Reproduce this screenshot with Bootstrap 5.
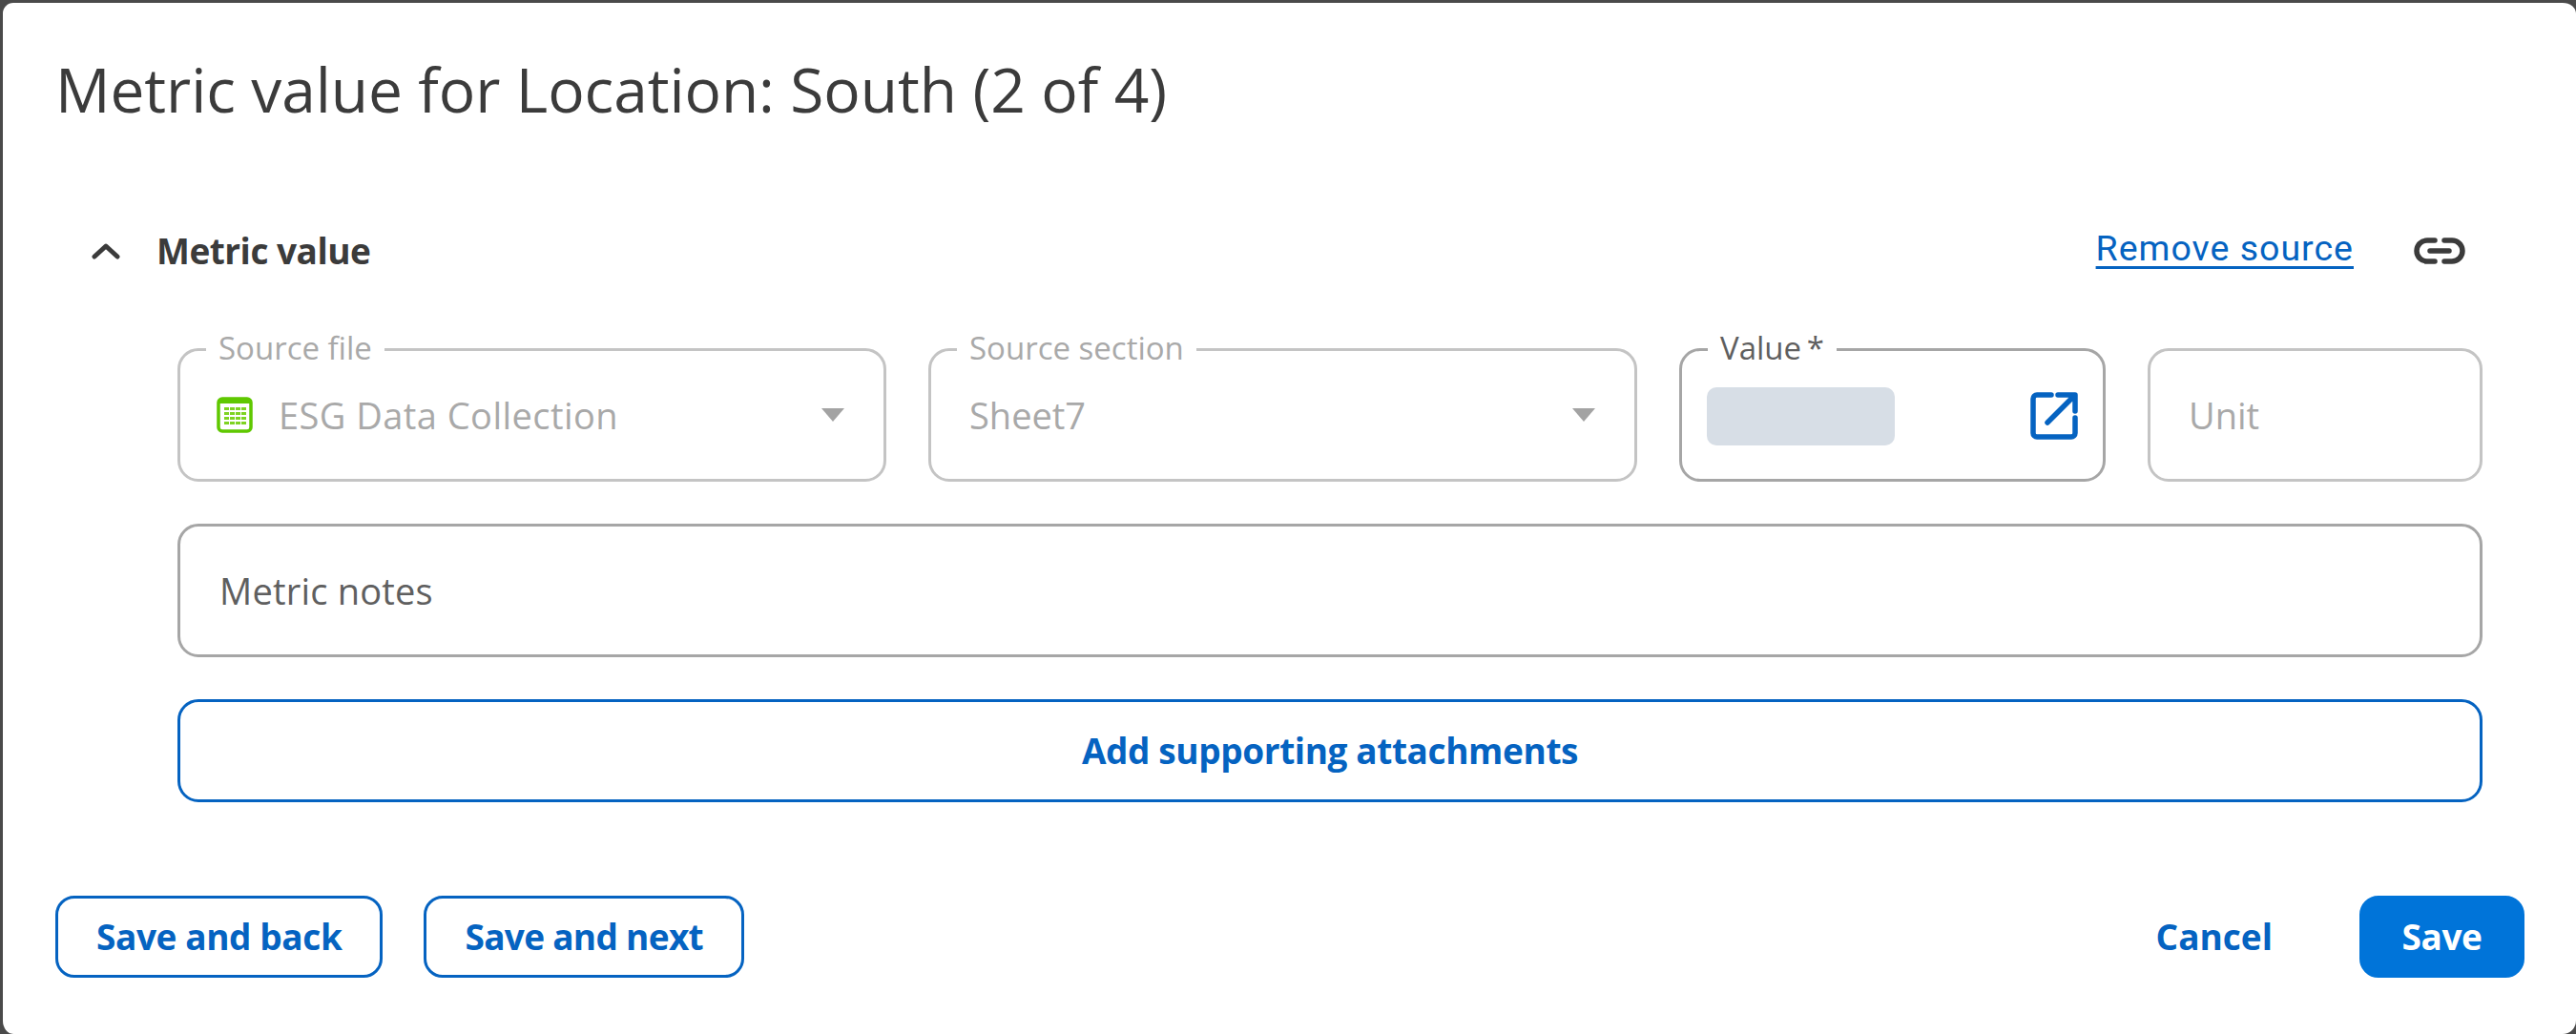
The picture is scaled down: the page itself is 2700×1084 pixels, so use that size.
<!DOCTYPE html>
<html lang="en">
<head>
<meta charset="utf-8">
<title>Metric value</title>
<link href="https://cdn.jsdelivr.net/npm/bootstrap@5.3.0/dist/css/bootstrap.min.css" rel="stylesheet">
<style>
html,body{height:100%;margin:0;background:#4a4a4a;overflow:hidden}
body{font-family:"Open Sans","Liberation Sans",sans-serif;color:#3b3b3b}
.shell{height:1084px;background:#fff;border:solid #4a4a4a;border-width:3px 0 0 3px;border-radius:14px;padding:0 54px 0 55px}
.ttl{font-size:64px;font-weight:400;line-height:80px;margin:0;padding-top:51px;color:#3b3b3b;letter-spacing:-.08px}
.sec-head{margin-top:99px;height:60px;padding-left:38px;padding-right:62px}
.sec-name{font-size:37px;font-weight:700;letter-spacing:-.5px;margin-left:38px}
.rm-link{font-family:Roboto,"Liberation Sans",sans-serif;font-size:37.5px;color:#0563c1;text-decoration:underline;text-underline-offset:6px;letter-spacing:1px;margin-bottom:6px}
.lnk-ico{margin-left:63px}
.fields{padding-left:128px;padding-right:44px}
.field-row{margin-top:72px;gap:44px}
.fbox{height:140px;border:3px solid #c4c4c4;border-radius:22px;padding:0 40px;position:relative;font-size:38px;color:#a9a9a9}
.fbox-a{width:743px}
.fbox-b{width:743px}
.fbox-c{width:447px;border-color:#a6a6a6;padding:0 26px}
.fbox-d{width:351px}
.flabel{position:absolute;left:27px;top:-22px;background:#fff;padding:0 13px;font-size:33px;line-height:38px;color:#a9a9a9}
.flabel-dark{color:#5f5f5f;word-spacing:-3px}
.sheet-ico{margin-left:-2px;margin-right:27px}
.esg-name{letter-spacing:.45px}
.caret-mark{width:0;height:0;border-left:12px solid transparent;border-right:12px solid transparent;border-top:14px solid #a3a3a3;margin-left:auto;margin-right:1px}
.mask-val{width:197px;height:61px;border-radius:10px;background:#d7dee6;margin-top:2px}
.ext-ico{margin-top:2px}
.notes{height:140px;margin-top:44px;border:3px solid #a6a6a6;border-radius:22px;padding:0 41px;font-size:38px;color:#5f5f5f;letter-spacing:.2px}
.wide-btn{height:108px;margin-top:44px;border:3px solid #0563c1;border-radius:22px;background:#fff;color:#0563c1;font-size:37px;font-weight:700;letter-spacing:-.4px;width:100%}
.foot-row{margin-top:98px}
.act{height:86px;border-radius:20px;font-size:37px;font-weight:700;padding:0 40px;border:3px solid #0563c1;background:#fff;color:#0563c1;letter-spacing:-.4px}
.act-gap{margin-left:43px;letter-spacing:-.7px}
.act-plain{border-color:transparent;background:transparent;padding:0;letter-spacing:0}
.act-fill{background:#0074d9;border-color:#0074d9;color:#fff;width:173px;margin-left:88px;padding:0}
</style>
</head>
<body>
<div class="shell">
  <h1 class="ttl">Metric value for Location: South (2 of 4)</h1>
  <div class="sec-head d-flex align-items-center">
    <svg width="30" height="18" viewBox="0 0 30 18" fill="none" stroke="#3b3b3b" stroke-width="5" stroke-linecap="round" stroke-linejoin="round"><path d="M3 15 15 4 27 15"/></svg>
    <span class="sec-name">Metric value</span>
    <a class="rm-link ms-auto" href="#">Remove source</a>
    <svg class="lnk-ico" width="54" height="28" viewBox="0 0 54 28" fill="none" stroke="#3b3b3b" stroke-width="5.5" stroke-linecap="round"><path d="M22 3H14a11 11 0 0 0 0 22h8M32 3h8a11 11 0 0 1 0 22h-8M17 14h20"/></svg>
  </div>
  <div class="fields">
    <div class="d-flex field-row">
      <div class="fbox fbox-a d-flex align-items-center">
        <span class="flabel">Source file</span>
        <svg class="sheet-ico flex-shrink-0" width="38" height="38" viewBox="0 0 38 38"><rect x="2" y="2" width="34" height="34" rx="4" fill="#fff" stroke="#5fc800" stroke-width="3.500"/><rect x="2" y="2" width="34" height="5" fill="#5fc800"/><g fill="#7ed321"><rect x="8" y="11" width="5" height="3"/><rect x="14" y="11" width="5" height="3"/><rect x="20" y="11" width="5" height="3"/><rect x="26" y="11" width="5" height="3"/><rect x="8" y="16" width="5" height="3"/><rect x="14" y="16" width="5" height="3"/><rect x="20" y="16" width="5" height="3"/><rect x="26" y="16" width="5" height="3"/><rect x="8" y="21" width="5" height="3"/><rect x="14" y="21" width="5" height="3"/><rect x="20" y="21" width="5" height="3"/><rect x="26" y="21" width="5" height="3"/><rect x="8" y="26" width="5" height="3"/><rect x="14" y="26" width="5" height="3"/><rect x="20" y="26" width="5" height="3"/><rect x="26" y="26" width="5" height="3"/></g></svg>
        <span class="esg-name">ESG Data Collection</span>
        <span class="caret-mark"></span>
      </div>
      <div class="fbox fbox-b d-flex align-items-center">
        <span class="flabel">Source section</span>
        <span>Sheet7</span>
        <span class="caret-mark"></span>
      </div>
      <div class="fbox fbox-c d-flex align-items-center justify-content-between">
        <span class="flabel flabel-dark">Value *</span>
        <span class="mask-val"></span>
        <svg class="ext-ico" width="50" height="50" viewBox="0 0 50 50" fill="none" stroke="#0563c1" stroke-width="5.500" stroke-linecap="round" stroke-linejoin="round"><path d="M22 3H7a4 4 0 0 0-4 4v36a4 4 0 0 0 4 4h36a4 4 0 0 0 4-4V27"/><path d="M29 3h18v17M45 5 18 32"/></svg>
      </div>
      <div class="fbox fbox-d d-flex align-items-center"><span>Unit</span></div>
    </div>
    <div class="notes d-flex align-items-center">Metric notes</div>
    <button type="button" class="btn wide-btn">Add supporting attachments</button>
  </div>
  <div class="d-flex foot-row align-items-center">
    <button type="button" class="btn act">Save and back</button>
    <button type="button" class="btn act act-gap">Save and next</button>
    <button type="button" class="btn act act-plain ms-auto">Cancel</button>
    <button type="button" class="btn act act-fill">Save</button>
  </div>
</div>
<script src="https://cdn.jsdelivr.net/npm/bootstrap@5.3.0/dist/js/bootstrap.bundle.min.js"></script>
</body>
</html>
